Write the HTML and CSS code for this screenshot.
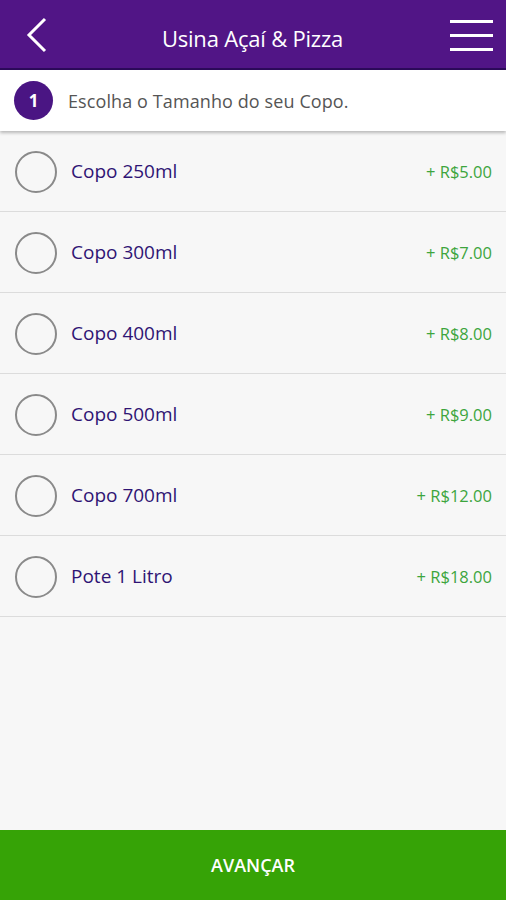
FILE: index.html
```html
<!DOCTYPE html>
<html lang="pt-BR">
<head>
  <meta charset="UTF-8" />
  <meta name="viewport" content="width=device-width, initial-scale=1" />
  <title>Usina Açaí &amp; Pizza</title>
  <link rel="stylesheet" href="styles.css">
</head>
<body>

  <header class="topbar">
    <button class="icon-btn back" aria-label="Voltar">
      <svg width="22" height="36" viewBox="0 0 22 36"><path d="M19 2 L3 18 L19 34" fill="none" stroke="#fff" stroke-width="3"/></svg>
    </button>
    <h1>Usina Açaí &amp; Pizza</h1>
    <button class="icon-btn menu" aria-label="Menu">
      <span></span><span></span><span></span>
    </button>
  </header>

  <div class="step">
    <span class="step-num">1</span>
    <span class="step-text">Escolha o Tamanho do seu Copo.</span>
  </div>

  <ul class="options">
    <li><span class="radio"></span><span class="name">Copo 250ml</span><span class="price">+ R$5.00</span></li>
    <li><span class="radio"></span><span class="name">Copo 300ml</span><span class="price">+ R$7.00</span></li>
    <li><span class="radio"></span><span class="name">Copo 400ml</span><span class="price">+ R$8.00</span></li>
    <li><span class="radio"></span><span class="name">Copo 500ml</span><span class="price">+ R$9.00</span></li>
    <li><span class="radio"></span><span class="name">Copo 700ml</span><span class="price">+ R$12.00</span></li>
    <li><span class="radio"></span><span class="name">Pote 1 Litro</span><span class="price">+ R$18.00</span></li>
  </ul>

  <button class="next">AVANÇAR</button>

</body>
</html>
```

FILE: styles.css
```css
body {
  margin: 0;
  height: 900px;
  display: flex;
  flex-direction: column;
  background: #f7f7f7;
  font-family: "Open Sans", "Noto Sans", sans-serif;
}

.topbar {
  height: 68px;
  background: #511586;
  border-bottom: 2px solid #2c0a5a;
  display: flex;
  align-items: center;
  justify-content: space-between;
  padding: 0 13px 0 25px;
  flex-shrink: 0;
}
.topbar h1 {
  margin: 7px 0 0 6px;
  color: #fff;
  font-size: 22px;
  font-weight: 400;
  letter-spacing: -0.2px;
}
.icon-btn {
  background: none;
  border: none;
  padding: 0;
  cursor: pointer;
}
.back {
  width: 24px;
  height: 36px;
  margin-top: 2px;
}
.menu {
  width: 43px;
  display: flex;
  flex-direction: column;
  gap: 11px;
  margin-top: 2px;
}
.menu span {
  height: 3px;
  background: #fff;
  display: block;
}

.step {
  height: 61px;
  background: #fff;
  display: flex;
  align-items: center;
  padding-left: 14px;
  box-shadow: 0 2px 3px rgba(0,0,0,0.25);
  position: relative;
  flex-shrink: 0;
}
.step-num {
  width: 39px;
  height: 39px;
  border-radius: 50%;
  background: #4a1583;
  color: #fff;
  font-weight: 700;
  font-size: 17px;
  display: flex;
  align-items: center;
  justify-content: center;
}
.step-text {
  margin-left: 15px;
  color: #555;
  font-size: 18px;
  letter-spacing: 0.1px;
}

.options {
  list-style: none;
  margin: 0;
  padding: 0;
  flex: 1;
}
.options li {
  height: 80px;
  border-bottom: 1px solid #dcdcdc;
  display: flex;
  align-items: center;
  padding: 0 14px 0 15px;
}
.radio {
  width: 38px;
  height: 38px;
  border: 2px solid #8a8a8a;
  border-radius: 50%;
  margin-top: 2px;
}
.name {
  margin-left: 14px;
  color: #2f1474;
  font-size: 19px;
  flex: 1;
}
.price {
  color: #3da53d;
  font-size: 16.5px;
}

.next {
  height: 70px;
  border: none;
  background: #36a306;
  color: #fff;
  font-family: inherit;
  font-size: 18px;
  font-weight: 600;
  flex-shrink: 0;
}
```
